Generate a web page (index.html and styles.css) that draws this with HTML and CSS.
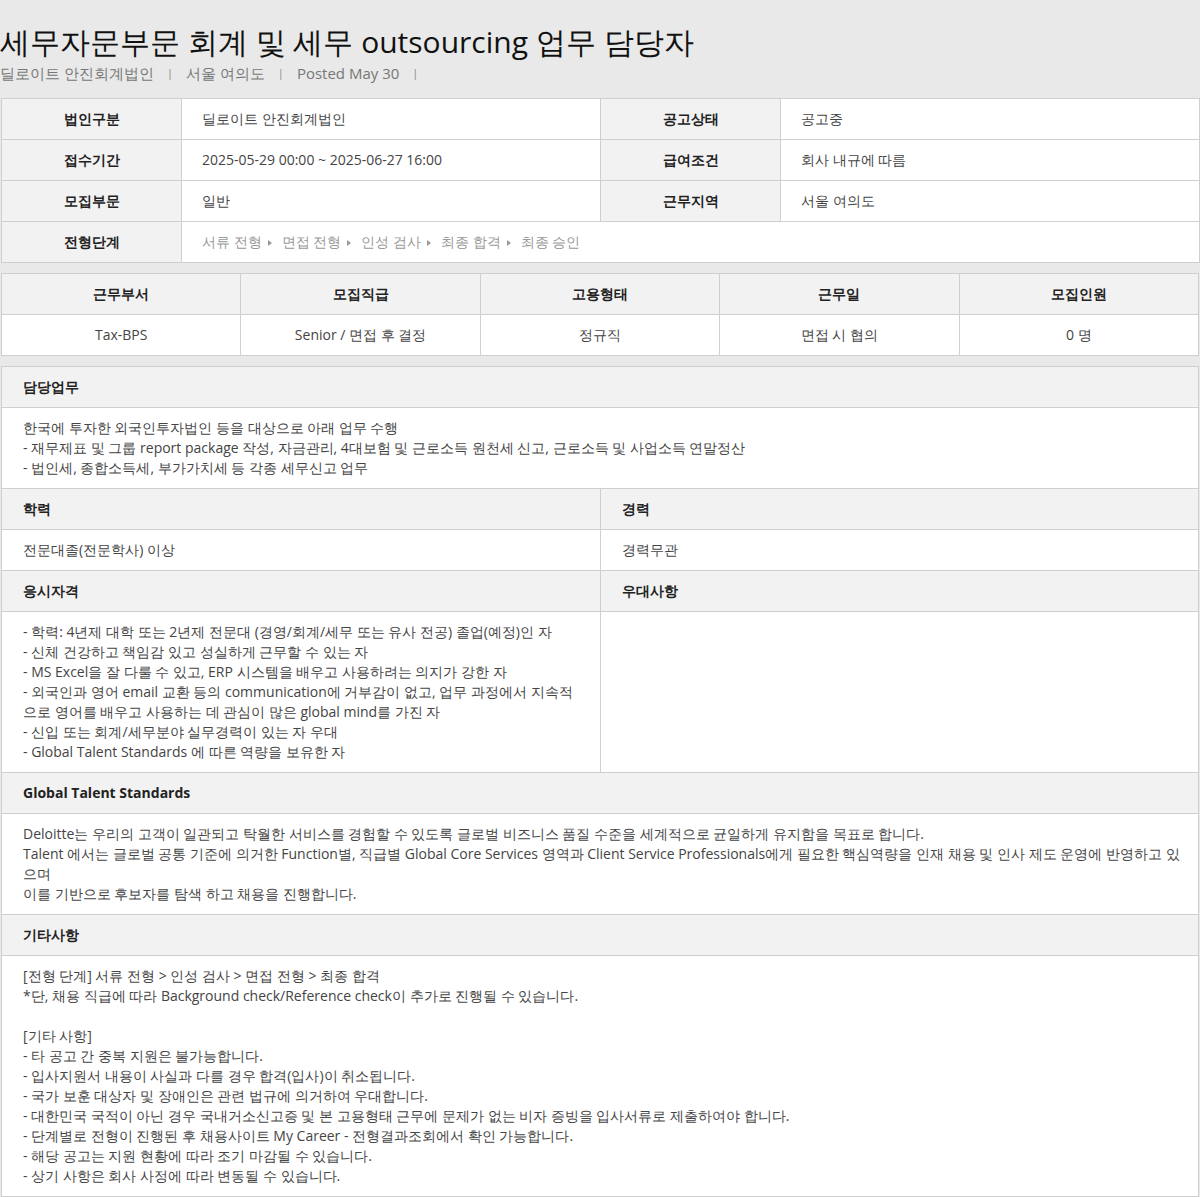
FILE: index.html
```html
<!DOCTYPE html>
<html lang="ko">
<head>
<meta charset="utf-8">
<title>세무자문부문 회계 및 세무 outsourcing 업무 담당자</title>
<link rel="stylesheet" href="styles.css">
</head>
<body>
<div class="page">
  <header class="head">
    <h1 class="title">세무자문부문 회계 및 세무 outsourcing 업무 담당자</h1>
    <div class="meta">
      <span>딜로이트 안진회계법인</span><span class="sep">|</span><span>서울 여의도</span><span class="sep">|</span><span>Posted May 30</span><span class="sep">|</span>
    </div>
  </header>

  <table class="tbl info">
    <colgroup><col class="c-lab"><col class="c-val"><col class="c-lab"><col class="c-val"></colgroup>
    <tr><th>법인구분</th><td>딜로이트 안진회계법인</td><th>공고상태</th><td>공고중</td></tr>
    <tr><th>접수기간</th><td>2025-05-29 00:00 ~ 2025-06-27 16:00</td><th>급여조건</th><td>회사 내규에 따름</td></tr>
    <tr><th>모집부문</th><td>일반</td><th>근무지역</th><td>서울 여의도</td></tr>
    <tr><th>전형단계</th><td colspan="3" class="steps">
      <span>서류 전형</span><i class="arr"></i><span>면접 전형</span><i class="arr"></i><span>인성 검사</span><i class="arr"></i><span>최종 합격</span><i class="arr"></i><span>최종 승인</span>
    </td></tr>
  </table>

  <table class="tbl five">
    <tr><th>근무부서</th><th>모집직급</th><th>고용형태</th><th>근무일</th><th>모집인원</th></tr>
    <tr><td>Tax-BPS</td><td>Senior / 면접 후 결정</td><td>정규직</td><td>면접 시 협의</td><td>0 명</td></tr>
  </table>

  <table class="tbl detail">
    <colgroup><col class="half"><col class="half"></colgroup>
    <tr><th colspan="2">담당업무</th></tr>
    <tr><td colspan="2">한국에 투자한 외국인투자법인 등을 대상으로 아래 업무 수행<br>- 재무제표 및 그룹 report package 작성, 자금관리, 4대보험 및 근로소득 원천세 신고, 근로소득 및 사업소득 연말정산<br>- 법인세, 종합소득세, 부가가치세 등 각종 세무신고 업무</td></tr>
    <tr><th>학력</th><th>경력</th></tr>
    <tr><td>전문대졸(전문학사) 이상</td><td>경력무관</td></tr>
    <tr><th>응시자격</th><th>우대사항</th></tr>
    <tr><td>- 학력: 4년제 대학 또는 2년제 전문대 (경영/회계/세무 또는 유사 전공) 졸업(예정)인 자<br>- 신체 건강하고 책임감 있고 성실하게 근무할 수 있는 자<br>- MS Excel을 잘 다룰 수 있고, ERP 시스템을 배우고 사용하려는 의지가 강한 자<br>- 외국인과 영어 email 교환 등의 communication에 거부감이 없고, 업무 과정에서 지속적으로 영어를 배우고 사용하는 데 관심이 많은 global mind를 가진 자<br>- 신입 또는 회계/세무분야 실무경력이 있는 자 우대<br>- Global Talent Standards 에 따른 역량을 보유한 자</td><td></td></tr>
    <tr><th colspan="2">Global Talent Standards</th></tr>
    <tr><td colspan="2" class="brk">Deloitte는 우리의 고객이 일관되고 탁월한 서비스를 경험할 수 있도록 글로벌 비즈니스 품질 수준을 세계적으로 균일하게 유지함을 목표로 합니다.<br>Talent 에서는 글로벌 공통 기준에 의거한 Function별, 직급별 Global Core Services 영역과 Client Service Professionals에게 필요한 핵심역량을 인재 채용 및 인사 제도 운영에 반영하고 있으며<br>이를 기반으로 후보자를 탐색 하고 채용을 진행합니다.</td></tr>
    <tr><th colspan="2">기타사항</th></tr>
    <tr><td colspan="2">[전형 단계] 서류 전형 &gt; 인성 검사 &gt; 면접 전형 &gt; 최종 합격<br>*단, 채용 직급에 따라 Background check/Reference check이 추가로 진행될 수 있습니다.<br><br>[기타 사항]<br>- 타 공고 간 중복 지원은 불가능합니다.<br>- 입사지원서 내용이 사실과 다를 경우 합격(입사)이 취소됩니다.<br>- 국가 보훈 대상자 및 장애인은 관련 법규에 의거하여 우대합니다.<br>- 대한민국 국적이 아닌 경우 국내거소신고증 및 본 고용형태 근무에 문제가 없는 비자 증빙을 입사서류로 제출하여야 합니다.<br>- 단계별로 전형이 진행된 후 채용사이트 My Career - 전형결과조회에서 확인 가능합니다.<br>- 해당 공고는 지원 현황에 따라 조기 마감될 수 있습니다.<br>- 상기 사항은 회사 사정에 따라 변동될 수 있습니다.</td></tr>
  </table>
</div>
</body>
</html>
```

FILE: styles.css
```css
* { box-sizing: border-box; }
html, body {
  margin: 0;
  padding: 0;
  background: #e8e9e8;
}
body {
  font-family: "Open Sans", sans-serif;
  font-size: 14px;
  line-height: 20px;
  color: #333;
}
.page {
  padding: 0 1px 1px 1px;
}
.head {
  padding-top: 22px;
  margin-left: -1px;
}
.title {
  margin: 0;
  font-size: 30px;
  line-height: 40px;
  font-weight: 400;
  color: #111;
}
.meta {
  margin-top: 0;
  font-size: 15px;
  line-height: 22px;
  color: #777;
  display: flex;
  align-items: center;
}
.meta .sep {
  font-size: 11px;
  color: #888;
  padding: 0 13px;
}
.tbl {
  width: 100%;
  border-collapse: collapse;
  table-layout: fixed;
  background: #fff;
}
.tbl th, .tbl td {
  border: 1px solid #cfcfcf;
  height: 41px;
  padding: 10px 20px;
  vertical-align: middle;
}
.tbl th {
  background: #f2f2f2;
  color: #222;
  font-weight: 700;
}
.info { margin-top: 14px; }
.info col.c-lab { width: 180px; }
.info col.c-val { width: 419px; }
.info th { text-align: center; }
.info td { color: #444; }
.info td.steps { color: #999; }
.steps span { display: inline-block; }
.arr {
  display: inline-block;
  width: 0; height: 0;
  border-left: 4px solid #999;
  border-top: 3.5px solid transparent;
  border-bottom: 3.5px solid transparent;
  margin: 0 10px 1px 6px;
  vertical-align: middle;
}
.five { margin-top: 10px; }
.five th, .five td { text-align: center; }
.five td { color: #444; }
.detail { margin-top: 10px; }
.detail col.half { width: 50%; }
.detail th {
  text-align: left;
  padding-left: 21px;
}
.detail td {
  padding: 10px 19px 10px 21px;
  color: #444;
  vertical-align: top;
}
.detail td.brk {
  word-break: break-all;
  padding-right: 8px;
}
```
